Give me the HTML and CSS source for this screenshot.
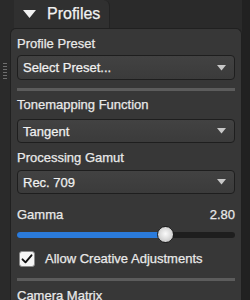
FILE: index.html
```html
<!DOCTYPE html>
<html lang="en">
<head>
  <meta charset="UTF-8">
  <title>Profiles</title>
  <link rel="stylesheet" href="styles.css">
</head>
<body>
  <div class="window">
    <!-- drag handle on the left edge -->
    <div class="grip"><span class="grip-dots"></span></div>

    <div class="column">
      <div class="tab">
        <svg class="tab-arrow" width="13" height="8" viewBox="0 0 13 8"><path d="M0 0h13L6.5 8z" fill="#f2f2f2"/></svg>
        <span>Profiles</span>
      </div>

      <div class="panel">
        <div class="field-label">Profile Preset</div>
        <div class="select select-first">
          <span>Select Preset...</span>
          <svg class="select-arrow" width="9" height="6" viewBox="0 0 9 6"><path d="M0 0h9L4.5 5.5z" fill="#c8c8c8"/></svg>
        </div>

        <div class="divider"></div>

        <div class="field-label">Tonemapping Function</div>
        <div class="select">
          <span>Tangent</span>
          <svg class="select-arrow" width="9" height="6" viewBox="0 0 9 6"><path d="M0 0h9L4.5 5.5z" fill="#c8c8c8"/></svg>
        </div>

        <div class="field-label field-label-spaced">Processing Gamut</div>
        <div class="select select-tight">
          <span>Rec. 709</span>
          <svg class="select-arrow" width="9" height="6" viewBox="0 0 9 6"><path d="M0 0h9L4.5 5.5z" fill="#c8c8c8"/></svg>
        </div>

        <div class="value-row">
          <span>Gamma</span>
          <span>2.80</span>
        </div>
        <div class="slider">
          <div class="slider-track"><div class="slider-fill" style="width: 68%"></div></div>
          <div class="slider-thumb" style="left: 140px"></div>
        </div>

        <div class="check-row">
          <span class="checkbox">
            <svg width="16" height="16" viewBox="0 0 16 16"><path d="M3.5 8.3l3 3 6-7" fill="none" stroke="#111" stroke-width="1.9" stroke-linecap="round" stroke-linejoin="round"/></svg>
          </span>
          <span>Allow Creative Adjustments</span>
        </div>

        <div class="divider divider-bottom"></div>

        <div class="field-label">Camera Matrix</div>
      </div>
    </div>

    <div class="edge"></div>
  </div>
</body>
</html>
```

FILE: styles.css
```css
/* Dark dock panel */
body {
  margin: 0;
  padding: 0;
  background: #2a2a2a;
  font-family: "Liberation Sans", Arial, sans-serif;
  font-size: 13px;
  color: #e9e9e9;
  -webkit-text-stroke: 0.25px;
}
.window {
  display: flex;
  width: 250px;
  height: 300px;
  overflow: hidden;
}
.grip {
  width: 10px;
  flex-shrink: 0;
}
.grip-dots {
  display: block;
  width: 4px;
  height: 17px;
  margin: 62px 0 0 3px;
  background-image: radial-gradient(circle, #6f6f6f 0.8px, transparent 1px);
  background-size: 2px 3px;
}
.column {
  flex: 1;
  display: flex;
  flex-direction: column;
}
.edge {
  width: 8px;
  flex-shrink: 0;
  background: #212121;
}

/* Collapsible section tab */
.tab {
  display: flex;
  flex-shrink: 0;
  align-items: center;
  gap: 11px;
  width: 96px;
  height: 28px;
  margin-left: 4px;
  padding-left: 9px;
  box-sizing: border-box;
  background: #303030;
  border-right: 1px solid #232323;
  border-radius: 0 6px 0 0;
  font-size: 16px;
  color: #f2f2f2;
}
.tab-arrow {
  margin-top: -1px;
}

.panel {
  flex: 1;
  padding: 7px 6px 0 6px;
  background: #373737;
  border: 1px solid #202020;
  border-bottom: none;
  border-radius: 6px 6px 0 0;
}
.field-label {
  line-height: 16px;
  margin-bottom: 6px;
}
.field-label-spaced {
  margin-top: 7px;
  margin-bottom: 4px;
}
.select {
  display: flex;
  align-items: center;
  justify-content: space-between;
  height: 24px;
  padding: 0 8px 0 5px;
  box-sizing: border-box;
  background: linear-gradient(#424242, #3b3b3b);
  border: 1px solid #1e1e1e;
  border-radius: 4px;
  color: #f0f0f0;
}
.select-first {
  height: 25px;
  margin-top: -3px;
}
.divider {
  height: 3px;
  margin: 8px 0 6px;
  background: #5c5c5c;
}
.divider-bottom {
  margin: 11px 0 7px;
}

/* Gamma slider */
.value-row {
  display: flex;
  justify-content: space-between;
  margin-top: 13px;
  line-height: 16px;
}
.slider {
  position: relative;
  display: flex;
  align-items: center;
  height: 17px;
  margin-top: 3px;
}
.slider-track {
  flex: 1;
  height: 6px;
  border-radius: 3px;
  background: #1e1e1e;
  overflow: hidden;
}
.slider-fill {
  height: 100%;
  background: #2b7bdb;
}
.slider-thumb {
  position: absolute;
  top: 0;
  width: 17px;
  height: 17px;
  box-sizing: border-box;
  border-radius: 50%;
  border: 1px solid #1c1c1c;
  background: radial-gradient(circle at 50% 45%, #fbfbfb 0, #dedede 45%, #b5b5b5 100%);
}

.check-row {
  display: flex;
  align-items: center;
  gap: 10px;
  margin: 8px 0 0 2px;
  line-height: 16px;
}
.checkbox {
  display: block;
  width: 16px;
  height: 16px;
  box-sizing: border-box;
  background: #f5f5f5;
  border: 1px solid #8a8a8a;
  border-radius: 3px;
}
.checkbox svg {
  display: block;
  margin: -1px 0 0 -1px;
}
```
